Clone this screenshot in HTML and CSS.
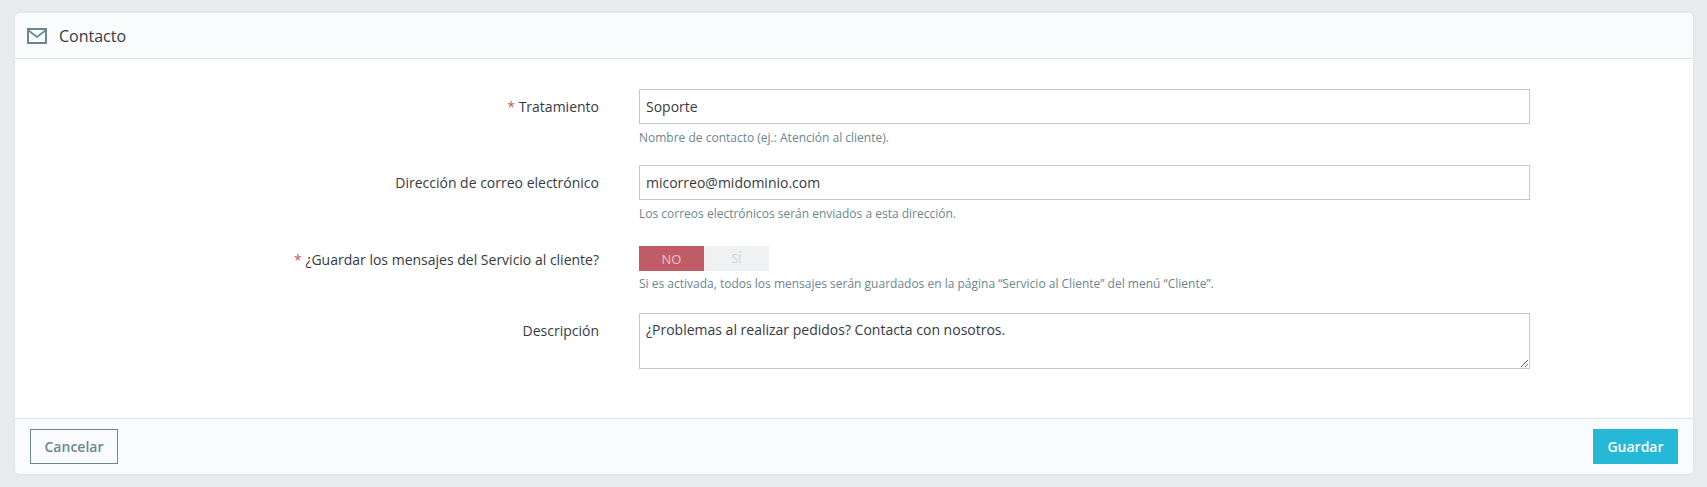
FILE: index.html
```html
<!DOCTYPE html>
<html lang="es">
<head>
<meta charset="utf-8">
<title>Contacto</title>
<link rel="stylesheet" href="styles.css">
</head>
<body>
<form class="card">
  <header class="card-head">
    <svg class="mail-icon" width="20" height="16" viewBox="0 0 20 16" fill="none" stroke="#6c868e" stroke-width="2"><rect x="1" y="1" width="18" height="14"/><path d="M1.5 2.5l8.5 6.5 8.5-6.5" stroke-width="1.6"/></svg>
    <h3 class="card-title">Contacto</h3>
  </header>
  <div class="card-body">
    <div class="row">
      <label class="label"><span class="req">*</span> Tratamiento</label>
      <div class="field">
        <input class="input" type="text" value="Soporte">
        <p class="help">Nombre de contacto (ej.: Atención al cliente).</p>
      </div>
    </div>
    <div class="row">
      <label class="label">Dirección de correo electrónico</label>
      <div class="field">
        <input class="input" type="text" value="micorreo@midominio.com">
        <p class="help">Los correos electrónicos serán enviados a esta dirección.</p>
      </div>
    </div>
    <div class="row row-switch">
      <label class="label label-switch"><span class="req">*</span> ¿Guardar los mensajes del Servicio al cliente?</label>
      <div class="field">
        <div class="switch"><span class="sw sw-no">NO</span><span class="sw sw-yes">SÍ</span></div>
        <p class="help help-switch">Si es activada, todos los mensajes serán guardados en la página “Servicio al Cliente” del menú “Cliente”.</p>
      </div>
    </div>
    <div class="row">
      <label class="label">Descripción</label>
      <div class="field">
        <textarea class="input textarea">¿Problemas al realizar pedidos? Contacta con nosotros.</textarea>
      </div>
    </div>
  </div>
  <footer class="card-foot">
    <button type="button" class="btn btn-cancel">Cancelar</button>
    <button type="button" class="btn btn-save">Guardar</button>
  </footer>
</form>
</body>
</html>
```
FILE: styles.css
```css
* { box-sizing: border-box; }
html, body { height: 100%; }
body {
  margin: 0;
  padding: 13px 14px 13px 15px;
  background: #e9ebec;
  font-family: "Open Sans", sans-serif;
  font-size: 14px;
  color: #363a41;
  overflow: hidden;
}
.card {
  display: flex;
  flex-direction: column;
  height: 461px;
  background: #fff;
  border-radius: 5px;
  box-shadow: 0 0 4px 0 rgba(0, 0, 0, .06);
}
.card-head {
  display: flex;
  align-items: center;
  height: 46px;
  padding-left: 12px;
  background: #fafbfc;
  border-bottom: 1px solid #dbe6e9;
  border-radius: 5px 5px 0 0;
}
.mail-icon { display: block; margin-right: 12px; }
.card-title { margin: 0; font-size: 16px; font-weight: 400; line-height: 20px; color: #363a41; }
.card-body { flex: 1; padding-top: 30px; }
.row { display: grid; grid-template-columns: 584px 891px; column-gap: 40px; margin-bottom: 20px; }
.row-switch { margin-top: -1px; margin-bottom: 22px; padding-top: 6px; }
.label { text-align: right; line-height: 19px; padding-top: 8px; }
.label-switch { padding-top: 4px; }
.req { color: #c05c67; }
.input {
  display: block;
  width: 100%;
  height: 35px;
  padding: 0 6px;
  border: 1px solid #bbcdd2;
  border-radius: 0;
  background: #fff;
  font: 14px "Open Sans", sans-serif;
  color: #363a41;
  outline: 0;
}
.textarea { height: 56px; padding: 6px; resize: vertical; }
.help { margin: 6px 0 0; font-size: 12px; line-height: 15px; color: #6c868e; }
.help-switch { margin-top: 5px; }
.switch { display: flex; width: 130px; height: 25px; }
.sw { flex: 1; display: flex; align-items: center; justify-content: center; font-size: 13px; }
.sw-no { background: #c05c67; color: #e4c5c9; }
.sw-yes { background: #eff1f2; color: #c9d5d9; font-size: 12px; }
.card-foot {
  display: flex;
  justify-content: space-between;
  align-items: center;
  height: 56px;
  padding: 0 15px;
  background: #fafbfc;
  border-top: 1px solid #dbe6e9;
  border-radius: 0 0 5px 5px;
}
.btn {
  height: 35px;
  padding: 0;
  border: 1px solid;
  border-radius: 0;
  font: 600 14px "Open Sans", sans-serif;
}
.btn-cancel { width: 88px; background: transparent; border-color: #6c868e; color: #6c868e; }
.btn-save { width: 85px; background: #25b9d7; border-color: #25b9d7; color: #fff; }
```
